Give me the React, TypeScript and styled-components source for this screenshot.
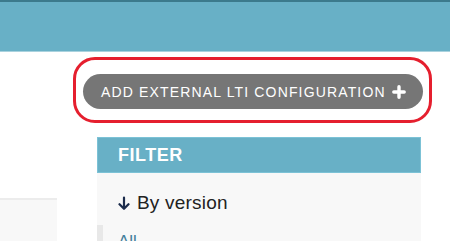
import React from "react";
import styled, { createGlobalStyle } from "styled-components";

const GlobalStyle = createGlobalStyle`
  html, body {
    margin: 0;
    padding: 0;
    background: #ffffff;
    overflow: hidden;
  }
  body {
    font-family: "Liberation Sans", Arial, sans-serif;
  }
`;

function PlusIcon() {
  return (
    <svg width="14" height="14" viewBox="0 0 14 14" aria-hidden="true">
      <path d="M7 1.8v10.4M1.8 7h10.4" stroke="#ffffff" strokeWidth="3.4" strokeLinecap="round" />
    </svg>
  );
}

function DownArrow() {
  return (
    <svg width="12" height="15" viewBox="0 0 12 15" aria-hidden="true">
      <path
        d="M6 1.5v11M1.5 8.2L6 12.8l4.5-4.6"
        fill="none"
        stroke="#1b2b4b"
        strokeWidth="2.2"
        strokeLinecap="round"
        strokeLinejoin="round"
      />
    </svg>
  );
}

function App() {
  return (
    <>
      <GlobalStyle />
      <Page>
        <Header />
        <Main>
          <Results>
            <ResultsBox />
          </Results>
          <Sidebar>
            <Highlight>
              <AddButton href="#">
                <span>ADD EXTERNAL LTI CONFIGURATION</span>
                <PlusIcon />
              </AddButton>
            </Highlight>
            <Filter>
              <FilterTitle>FILTER</FilterTitle>
              <FilterBody>
                <FilterHeading>
                  <DownArrow />
                  <span>By version</span>
                </FilterHeading>
                <FilterList>
                  <FilterItem $selected>
                    <FilterLink href="#">All</FilterLink>
                  </FilterItem>
                </FilterList>
              </FilterBody>
            </Filter>
          </Sidebar>
        </Main>
      </Page>
    </>
  );
}

export default App;

const Page = styled.div`
  width: 450px;
  height: 241px;
  overflow: hidden;
`;

const Header = styled.header`
  height: 49px;
  background-color: #68b0c6;
  border-top: 2px solid #3c7a8c;
  border-bottom: 1px solid #a9d2de;
`;

const Main = styled.div`
  display: flex;
  flex-direction: row;
`;

const Results = styled.div`
  flex: 1;
  padding-top: 146px;
`;

const ResultsBox = styled.div`
  width: 57px;
  height: 60px;
  background-color: #f8f8f8;
  border-top: 2px solid #ececec;
`;

const Sidebar = styled.aside`
  width: 324px;
  margin-right: 29px;
  display: flex;
  flex-direction: column;
`;

const Highlight = styled.div`
  margin: 5px -11px 0 -24px;
  padding: 14px 6px 11px 7px;
  border: 3px solid #e51f2e;
  border-radius: 22px;
`;

const AddButton = styled.a`
  display: flex;
  align-items: center;
  justify-content: space-between;
  height: 35px;
  padding: 0 17px 0 18px;
  border-radius: 18px;
  background-color: #767676;
  color: #ffffff;
  font-size: 14px;
  letter-spacing: 1.15px;
  text-decoration: none;
  white-space: nowrap;
`;

const Filter = styled.div`
  margin-top: 14px;
  background-color: #f8f8f8;
`;

const FilterTitle = styled.h2`
  margin: 0;
  height: 34px;
  padding-left: 20px;
  display: flex;
  align-items: center;
  background-color: #68b0c6;
  border: 1px solid #7cc2d6;
  color: #ffffff;
  font-size: 18px;
  font-weight: 600;
  letter-spacing: 0.5px;
`;

const FilterBody = styled.div`
  padding-top: 19px;
`;

const FilterHeading = styled.h3`
  margin: 0 0 0 21px;
  display: flex;
  align-items: center;
  gap: 7px;
  font-size: 19px;
  font-weight: 400;
  color: #222222;
  line-height: 22px;
  letter-spacing: 0.2px;
`;

const FilterList = styled.ul`
  list-style: none;
  margin: 11px 0 0 0;
  padding: 0;
`;

const FilterItem = styled.li<{ $selected?: boolean }>`
  border-left: 6px solid ${(props) => (props.$selected ? "#e8e8e8" : "transparent")};
  padding: 7px 0 8px 15px;
`;

const FilterLink = styled.a`
  color: #447e9b;
  font-size: 17px;
  text-decoration: none;
`;
